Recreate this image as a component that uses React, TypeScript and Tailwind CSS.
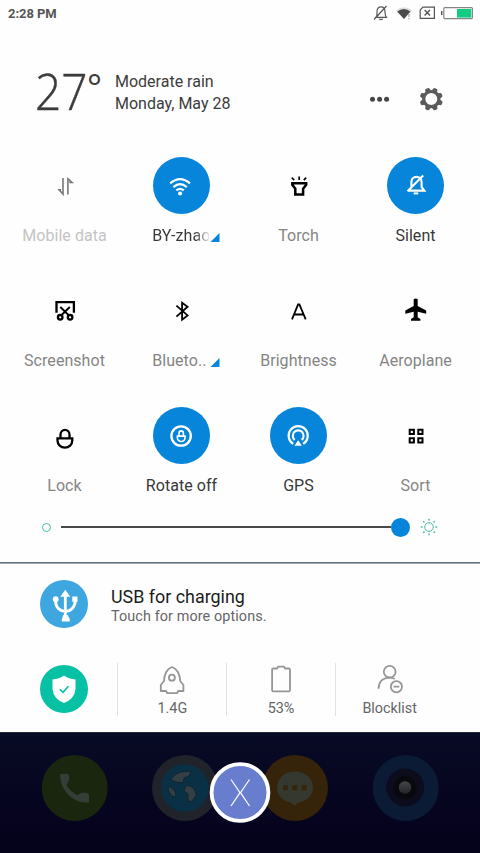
import type { ReactNode } from "react";

type ArtProps = { box: string; className: string; children: ReactNode };

function Art({ box, className, children }: ArtProps) {
  return (
    <svg viewBox={box} className={`block shrink-0 ${className}`} fill="none" aria-hidden="true">
      {children}
    </svg>
  );
}

type TileProps = {
  label: string;
  box: string;
  on?: boolean;
  tone?: string;
  more?: boolean;
  fade?: boolean;
  children: ReactNode;
};

function Tile({ label, box, on, tone = "text-[#858585]", more, fade, children }: TileProps) {
  return (
    <div className="flex h-[125px] flex-col items-center">
      <div className={`size-[57.4px] shrink-0 rounded-full ${on ? "bg-[#0785da] text-white" : "text-black"}`}>
        <Art box={box} className="size-full">{children}</Art>
      </div>
      <div className={`mt-[10px] flex h-6 items-center justify-center ${more ? "ml-[9px]" : ""}`}>
        <span
          className={`whitespace-nowrap text-[16px] leading-6 tracking-[0.05px] ${on ? "text-[#383838]" : tone} ${
            fade ? "w-[57px] bg-linear-to-r from-[#383838] from-75% to-[#38383822] bg-clip-text text-transparent" : ""
          } ${more && !fade ? "w-[57px]" : ""}`}
        >
          {label}
        </span>
        {more && (
          <Art box="0 0 10 10" className="mt-[2px] ml-[1px] size-[9.5px]">
            <path d="M10 0V10H0Z" fill="#0785da" />
          </Art>
        )}
      </div>
    </div>
  );
}

function StatusBar() {
  return (
    <div className="flex h-[27px] items-center justify-between pl-2">
      <span className="pt-px text-[13px] font-bold tracking-[-0.05px] text-[#555]">2:28 PM</span>
      <Art box="365 0 115 27" className="h-[27px] w-[115px]">
        <g stroke="#555" strokeWidth="1.2">
          <path d="M374.8 17.3h12.4M376.5 16.6c.6-1.2.5-2.8.5-4.5 0-3 1.5-5.2 4-5.2s4 2.2 4 5.2c0 2 0 3.6 1.3 5M374 19.5 386.5 6M379.2 18.8c.5 1 3 1 3.6 0" />
          <path d="M423 7.2h11.4v11.2h-14.2V10Z" />
          <path d="m424.6 10 5.4 5.4m0-5.4-5.4 5.4" strokeWidth="1.4" />
        </g>
        <path d="M396 10.5Q404 4 412 10.5L404 19Z" fill="#ddd" />
        <path d="M397.2 11.5Q404 6.5 410.4 11.5L404 19Z" fill="#4b4b4b" />
        <path d="M409 14v3m0 1v1.3" stroke="#aaa" strokeWidth="1.3" />
        <rect x="443.8" y="7.6" width="28.6" height="11" rx="1" stroke="#858585" strokeWidth="1.2" />
        <rect x="457" y="9" width="14.3" height="8.6" fill="#12cc83" />
        <path d="M441.7 11v4" stroke="#555" strokeWidth="1.4" />
      </Art>
    </div>
  );
}

function Weather() {
  return (
    <div className="flex h-[129.6px] pl-[35px] pr-[36px]">
      <div className="flex w-[80px] shrink-0 items-start font-['Open_Sans'] text-[#3c3c3c]">
        <span className="mt-[30px] w-[54px] origin-left scale-x-[0.92] text-[50px] font-light leading-[68px] [-webkit-text-stroke:0.5px_#3c3c3c]">27</span>
        <span className="mt-[36px] -ml-[2px] text-[35px] leading-[48px]">°</span>
      </div>
      <div className="mt-[44px] text-[16px] leading-[22px] text-[#3c3c3c]">
        <div>Moderate rain</div>
        <div>Monday, May 28</div>
      </div>
      <Art box="364 80 80 40" className="mt-[53px] ml-auto h-10 w-20">
        <g fill="#454545">
          <circle cx="372.5" cy="99.3" r="2.5" />
          <circle cx="379.6" cy="99.3" r="2.5" />
          <circle cx="386.6" cy="99.3" r="2.5" />
        </g>
        <g transform="translate(431.3 99.1)">
          <g fill="#5b5b5b">
            {[22.5, 67.5, 112.5, 157.5, 202.5, 247.5, 292.5, 337.5].map((angle) => (
              <path key={angle} d="M-2.9 -8 -2 -11.3Q0 -12.2 2 -11.3L2.9 -8Z" transform={`rotate(${angle})`} />
            ))}
          </g>
          <circle r="7.6" stroke="#5b5b5b" strokeWidth="3.2" />
        </g>
      </Art>
    </div>
  );
}

function Tiles() {
  return (
    <div className="grid h-[359.6px] grid-cols-4 content-start pt-[0.4px] pr-[6px] pl-[6px]">
      <Tile label="Mobile data" tone="text-[#c4c4c4]" box="35.7 156.6 57.4 57.4">
        <path d="M62.7 177.5V193.7L58.8 189.3H60.8M67.6 194V178.3L71.7 182H69" stroke="#777" strokeWidth="1.6" />
      </Tile>
      <Tile label="BY-zhao" on more fade box="152.6 156.6 57.4 57.4">
        <g stroke="currentColor" strokeWidth="2.2">
          <path d="M169.8 183Q179.7 174.5 189.6 183" />
          <path d="M173 186.7Q179.7 180.8 186.4 186.7" />
          <path d="M176 190Q179.7 186.9 183.4 190" />
        </g>
        <circle cx="179.7" cy="193.2" r="2" fill="currentColor" />
      </Tile>
      <Tile label="Torch" box="269.5 156.6 57.4 57.4">
        <g stroke="currentColor">
          <path d="M291.8 182.9H305.7V184.5L302.6 188.3V194.2H294.8V188.3L291.8 184.5Z" strokeWidth="2.5" />
          <path d="m291.3 177.3 2.4 2.4M298.7 176v3.6m7-2.3-2.4 2.4" strokeWidth="1.7" />
        </g>
      </Tile>
      <Tile label="Silent" on box="386.3 156.6 57.4 57.4">
        <g stroke="currentColor" strokeWidth="2.1">
          <path d="M407.3 190.2H423.6L420.9 186.6V181.5C420.9 174.8 410.7 174.8 410.7 181.5V187.4M406.8 190.8 422.5 175.2" />
          <path d="M413 193H417.5" strokeWidth="2" />
        </g>
      </Tile>
      <Tile label="Screenshot" box="35.7 282 57.4 57.4">
        <g stroke="currentColor" strokeWidth="2.3">
          <path d="M56.2 312.8V302.2H73.6V312.8" />
          <path d="M60 307 69 315.8M69.5 307 60.5 315.8" strokeWidth="1.9" />
          <circle cx="59.9" cy="317.3" r="2.3" />
          <circle cx="69.8" cy="317.3" r="2.3" />
        </g>
      </Tile>
      <Tile label="Blueto.." more box="152.6 281.7 57.4 57.4">
        <path d="m176 305.3 11.2 9.8-5.5 4.2V302.4l5.5 4.1L176 316.3" stroke="currentColor" strokeWidth="1.8" />
      </Tile>
      <Tile label="Brightness" box="269.5 281.7 57.4 57.4">
        <path d="M291.5 319 297.6 304.2H298.9L305.2 319M294 314.2H302.8" stroke="currentColor" strokeWidth="1.8" />
      </Tile>
      <Tile label="Aeroplane" box="386.3 281.7 57.4 57.4">
        <path d="M413 299Q415 297.5 417 299V305.8L425.5 310.2V313.5L417 311.4V317L419.7 318.8V320.4H410.3V318.8L413 317V311.4L404.6 313.5V310.2L413 305.8Z" fill="currentColor" />
      </Tile>
      <Tile label="Lock" box="35.7 407.3 57.4 57.4">
        <path d="M57.2 438.6H72V440.8A7.4 7.2 0 0 1 57.2 440.8ZM60.2 439V434.8A4.5 4.7 0 0 1 69.2 434.8V439" stroke="currentColor" strokeWidth="2.3" />
      </Tile>
      <Tile label="Rotate off" on box="152.6 407.3 57.4 57.4">
        <g stroke="currentColor">
          <circle cx="180.7" cy="436.3" r="9.7" strokeWidth="2.3" />
          <path d="M177 436.4H184.6V438A3.8 3.8 0 0 1 177 438ZM178.6 436.4V433.6A2.2 2.4 0 0 1 183 433.6V436.4" strokeWidth="1.6" />
        </g>
      </Tile>
      <Tile label="GPS" on box="269.5 407.3 57.4 57.4">
        <g stroke="currentColor" strokeWidth="2.1">
          <path d="M292.7 444.2A9.6 9.6 0 1 1 302.7 444.2" />
          <path d="M294.2 440.2A5.4 5.4 0 1 1 301.2 440.2" />
        </g>
        <path d="m297.7 440.5 3.7 5.6h-7.4Z" fill="currentColor" />
      </Tile>
      <Tile label="Sort" box="386.3 407.3 57.4 57.4">
        <path d="M409 430h4.2v4.2H409Zm8.6 0h4.2v4.2h-4.2ZM409 438.6h4.2v4.2H409Zm8.6 0h4.2v4.2h-4.2Z" stroke="currentColor" strokeWidth="2" />
      </Tile>
    </div>
  );
}

function BrightnessSlider() {
  return (
    <div className="flex h-[22px] items-center pl-[42px] pr-[41px]">
      <div className="size-[9px] rounded-full border border-[#42bda8]" />
      <div className="ml-[10px] h-[2px] flex-1 bg-[#494949]" />
      <div className="size-[19px] rounded-full bg-[#0785da]" />
      <Art box="-10 -10 20 20" className="ml-[9px] size-5">
        <circle r="4.3" stroke="#42bda8" strokeWidth="1" />
        {[0, 45, 90, 135, 180, 225, 270, 315].map((angle) => (
          <path key={angle} d="M0 -8.2V-6.5" stroke="#42bda8" strokeWidth="1.5" transform={`rotate(${angle})`} />
        ))}
      </Art>
    </div>
  );
}

function UsbNotice() {
  return (
    <div className="flex h-[84px] items-start pt-[16px] pl-[39.7px]">
      <Art box="39.7 580 48 48" className="size-12">
        <circle cx="63.7" cy="604" r="24" fill="#3ea7df" />
        <path d="M65 594V618M55.3 601C55.3 615 75 615 75 600" stroke="#fff" strokeWidth="2.8" />
        <path d="m65 589.7 5 7H60Z" fill="#fff" />
        <circle cx="55.4" cy="599.2" r="2.9" fill="#fff" />
        <path d="M72 596.4h5.2v5.4H72ZM63 615h4.5l2 4.2v2.2h-8v-2.2Z" fill="#fff" />
      </Art>
      <div className="mt-[7.4px] ml-[23.3px]">
        <div className="text-[17.9px] leading-[20px] text-[#1c1c1c]">USB for charging</div>
        <div className="text-[14.4px] leading-[19px] tracking-[0.1px] text-[#666]">Touch for more options.</div>
      </div>
    </div>
  );
}

function Shortcut({ label, box, children }: { label: string; box: string; children: ReactNode }) {
  return (
    <div className="flex h-[53px] w-[108.7px] flex-col items-center border-l border-[#e2e2e2]">
      <Art box={box} className="h-9 w-10">
        <g stroke="#969696" strokeWidth="1.8" strokeLinejoin="round">{children}</g>
      </Art>
      <span className="text-[14.4px] leading-5 text-[#666]">{label}</span>
    </div>
  );
}

function Shortcuts() {
  return (
    <div className="flex h-[84px] items-start pt-[14.6px] pl-[40.2px]">
      <Art box="40.5 665 48 48" className="mt-[2px] size-12">
        <circle cx="64.5" cy="689" r="24" fill="#07c1a5" />
        <path d="M64.5 675.4Q69 679 76 679.4V689Q75 699 64.5 703Q54 699 53 689V679.4Q60 679 64.5 675.4Z" fill="#fff" />
        <path d="m60.3 689.3 3.2 3 5.5-6.1" stroke="#07c1a5" strokeWidth="1.6" />
      </Art>
      <div className="ml-[29.3px] flex">
        <Shortcut label="1.4G" box="152.7 663 40 36">
          <path d="M172.7 667C168 668.5 164.7 674 164.7 681L161.5 685V691H166.7L168 693.2H177.7L179 691H184.1V685L180.9 681C180.9 674 177.4 668.5 172.7 667Z" />
          <circle cx="172.6" cy="677.7" r="3" />
        </Shortcut>
        <Shortcut label="53%" box="261.4 663 40 36">
          <path d="M272.5 669.5Q272.5 668.5 273.7 668.5H277.5L278.5 666.7H284.5L285.5 668.5H289.2Q290.4 668.5 290.4 669.7V690Q290.4 691.3 289.2 691.3H273.7Q272.5 691.3 272.5 690Z" />
        </Shortcut>
        <Shortcut label="Blocklist" box="370.3 663 40 36">
          <circle cx="390" cy="671.7" r="5.9" />
          <path d="M378.8 688.8C379 681 384 677.6 390 677.6Q393 677.6 395 679M393.8 686.7H399.6" />
          <circle cx="396.7" cy="686.7" r="5.6" />
        </Shortcut>
      </div>
    </div>
  );
}

function Dock() {
  return (
    <div className="h-[121px] border-t border-[#252838] bg-linear-to-b from-[#080b25] to-[#05021b]">
      <Art box="0 733 480 120" className="h-[120px] w-[480px]">
        <circle cx="74.7" cy="788" r="33" fill="#1b260f" />
        <path d="M60.3 774H67.5Q69.3 774 69.3 780L66.5 785Q70.5 792 77.5 795.2L82 792.6Q89 793 89 795V802.3C75 804.5 59 790.5 60.3 774Z" fill="#343e37" />
        <circle cx="185" cy="788" r="33" fill="#20242a" />
        <circle cx="185" cy="788" r="23.8" fill="#0a3045" />
        <g fill="#343f45" stroke="#111f2a" strokeWidth=".8">
          <path d="M171 780C173 774 182 770 191 772L189 776 184 778 183 783 176 782ZM169 786 175 791 176 797 172 796 168 790ZM185 787C189 783 197 789 196 796L191 802 188 800V794L184 791Z" />
        </g>
        <circle cx="295" cy="788" r="33" fill="#35230a" />
        <path d="M295 771.5C306 771.5 313 779 313 787.5 313 796 306 801 297.5 803L294.5 806 291.5 803C283 801 277 796 277 787.5 277 779 284 771.5 295 771.5Z" fill="#35382e" />
        <path d="M283 785.2h5v5h-5Zm9.3 0h5v5h-5Zm9.3 0h5v5h-5Z" fill="#35230a" />
        <circle cx="405.7" cy="788" r="33" fill="#0b1b36" />
        <circle cx="405.2" cy="787.5" r="19" fill="#0c0c1d" />
        <circle cx="405" cy="787.5" r="11.5" fill="#08090c" />
        <circle cx="405" cy="787.5" r="6.2" fill="url(#lens)" />
        <circle cx="240" cy="792.5" r="28.4" fill="#687dce" stroke="#fff" strokeWidth="3.8" />
        <path d="M231 779.5 240 792.7 231 806M249.5 779.5 240.5 792.7 249.5 806" stroke="#fff" strokeWidth="1.2" />
        <defs>
          <linearGradient id="lens" x1="0" y1="0" x2="0" y2="1">
            <stop stopColor="#454547" />
            <stop offset="1" stopColor="#242528" />
          </linearGradient>
        </defs>
      </Art>
    </div>
  );
}

export default function App() {
  return (
    <div className="flex h-[853px] w-[480px] flex-col overflow-hidden bg-[#fefefe] font-[Roboto,sans-serif]">
      <StatusBar />
      <Weather />
      <Tiles />
      <BrightnessSlider />
      <div className="mt-[23.8px] h-[2px] shrink-0 border-t border-[#626d83] bg-[#a0a7b4]" />
      <UsbNotice />
      <Shortcuts />
      <div className="flex-1" />
      <Dock />
    </div>
  );
}
